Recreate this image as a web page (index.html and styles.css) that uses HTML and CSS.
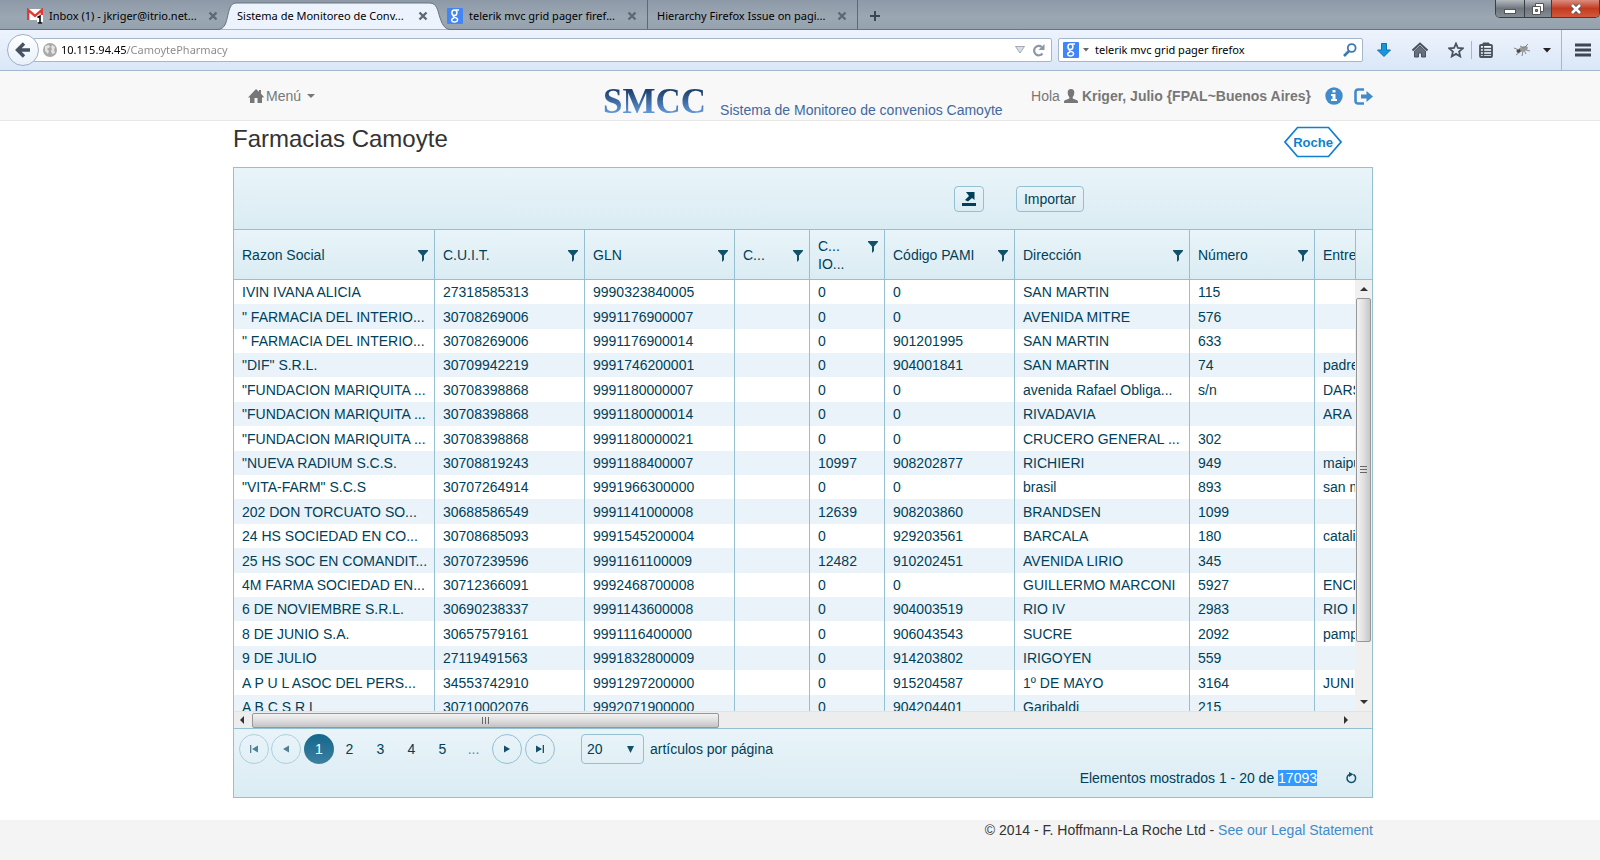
FILE: index.html
```html
<!DOCTYPE html>
<html lang="es">
<head>
    <meta charset="UTF-8">
    <title>Sistema de Monitoreo de Convenios Camoyte</title>
    <meta name="viewport" content="width=device-width, initial-scale=1.0">
    <link rel="stylesheet" href="styles.css">
</head>
<body>
    <svg class="defs" width="0" height="0">
        <symbol id="i-close" viewBox="0 0 10 10"><path d="M1.5 1.5 8.5 8.5M8.5 1.5 1.5 8.5" stroke="currentColor" stroke-width="2.4"/></symbol>
        <symbol id="i-google" viewBox="0 0 16 16"><rect width="16" height="16" rx="1" fill="#4285f4"/><g fill="none" stroke="#fff"><ellipse cx="7.4" cy="4.8" rx="2.5" ry="2.8" stroke-width="1.5"/><path d="M8.5 2H12M7 7.6C5.6 8.6 6.6 9.2 8.4 9.6c3.4.8 2.6 4.4-.9 4.4-3.6 0-3.8-3.4-.2-4" stroke-width="1.4"/></g></symbol>
        <symbol id="i-filter" viewBox="0 0 10 12"><path d="M0 0h10v1L6 5.500V10l-2 2V5.500L0 1z" fill="currentColor"/></symbol>
        <symbol id="i-first" viewBox="0 0 8 8"><path d="M0 0h1.300v8H0zM8 .500v7L2 4z" fill="currentColor"/></symbol>
        <symbol id="i-prev" viewBox="0 0 8 8"><path d="M7 .5v7L1 4z" fill="currentColor"/></symbol>
    </svg>

    <div class="browser">
        <div class="tabs">
            <div class="tab">
                <svg width="16" height="16" viewBox="0 0 16 16"><path d="M0 1h16v11H0z" fill="#fff"/><path d="M1.200 12V2L8 8l6.800-6v10" fill="none" stroke="#dd3b35" stroke-width="2.400"/><path d="M10 7h6v9h-6z" fill="#fff"/><path d="M10.500 9.500 13 8v7M10.500 15h5" fill="none" stroke="#000" stroke-width="1.500"/></svg>
                <span class="tab-title">Inbox (1) - jkriger@itrio.net...</span>
                <svg class="tab-close" width="10" height="10"><use href="#i-close"/></svg>
            </div>
            <div class="tab tab-active">
                <svg class="tab-shape" width="232" height="29" viewBox="0 0 232 29"><path d="M0 29C7 28 8 23 10 14 12 5 14 2.500 19 2.500H211C217 2.500 219 6 221 14 224 24 226 28 232 29" fill="#edf3fc" stroke="#66737f"/></svg>
                <span class="tab-title">Sistema de Monitoreo de Conv...</span>
                <svg class="tab-close" width="10" height="10"><use href="#i-close"/></svg>
            </div>
            <div class="tab tab-line">
                <svg width="16" height="16"><use href="#i-google"/></svg>
                <span class="tab-title">telerik mvc grid pager firef...</span>
                <svg class="tab-close" width="10" height="10"><use href="#i-close"/></svg>
            </div>
            <div class="tab tab-line">
                <span class="tab-title">Hierarchy Firefox Issue on pagi...</span>
                <svg class="tab-close" width="10" height="10"><use href="#i-close"/></svg>
            </div>
            <button class="new-tab" aria-label="Nueva pestaña"><svg width="12" height="12" viewBox="0 0 12 12"><path d="M6 1v10M1 6h10" stroke="#3d4752" stroke-width="2"/></svg></button>
            <div class="win-buttons">
                <button class="win-min" aria-label="Minimizar"><svg width="14" height="14" viewBox="0 0 14 14"><rect x="1.500" y="7.500" width="11" height="4" fill="#fff" stroke="#555"/></svg></button>
                <button class="win-max" aria-label="Restaurar"><svg width="14" height="14" viewBox="0 0 14 14"><path d="M4.500 1.500h8v8h-8z" fill="#fff" stroke="#555"/><path d="M1.500 4.500h8v8h-8z" fill="#fff" stroke="#555"/><path d="M4.500 7.500h2v2h-2z" fill="#888" stroke="#555"/></svg></button>
                <button class="win-close" aria-label="Cerrar"><svg width="14" height="14" viewBox="0 0 14 14"><path d="M3 3l8 8M11 3l-8 8" stroke="#555" stroke-width="4.500"/><path d="M3 3l8 8M11 3l-8 8" stroke="#fff" stroke-width="2.600"/></svg></button>
            </div>
        </div>
        <div class="toolbar">
            <button class="back" aria-label="Atrás"><svg width="16" height="16" viewBox="0 0 16 16"><path d="M9 1.500 2.500 8 9 14.500M3 8h12" fill="none" stroke="#46525f" stroke-width="3.400"/></svg></button>
            <div class="url-box">
                <svg width="14" height="14" viewBox="0 0 14 14"><circle cx="7" cy="7" r="7" fill="#a9a9a9"/><path d="M2 3l4-1 1 2-3 2 2 2-1 3-3-3zM9 2l3 2-1 3 1 3-3 1-1-3 1-2-1-2z" fill="#e4e4e4"/></svg>
                <input class="url" type="text" aria-label="Dirección" value="10.115.94.45/CamoytePharmacy">
                <svg width="10" height="8" viewBox="0 0 10 8"><path d="M.5.5h9L5 7z" fill="#d9dee6" stroke="#a3aab5"/></svg>
                <svg class="reload" width="13" height="13" viewBox="0 0 13 13"><path d="M10.500 9.500A4.700 4.700 0 1 1 9.800 3" fill="none" stroke="#8c98a6" stroke-width="2.200"/><path d="M12.500 0v6h-6z" fill="#8c98a6"/></svg>
            </div>
            <div class="search-box">
                <svg width="16" height="16"><use href="#i-google"/></svg>
                <svg class="engine" width="6" height="4" viewBox="0 0 6 4"><path d="M0 0h6L3 3.500z" fill="#666"/></svg>
                <input class="search" type="text" aria-label="Buscar" value="telerik mvc grid pager firefox">
                <svg width="14" height="14" viewBox="0 0 14 14"><circle cx="8.700" cy="5" r="3.900" fill="none" stroke="#3c78b4" stroke-width="1.800"/><path d="M6 8 1 13" stroke="#3c78b4" stroke-width="2.600"/></svg>
            </div>
            <div class="tools">
                <button aria-label="Descargas"><svg width="14" height="14" viewBox="0 0 14 14"><path d="M4.500.5h5V7h4L7 13.500.5 7h4z" fill="#1a94dc" stroke="#0f72b0"/></svg></button>
                <button aria-label="Inicio"><svg width="16" height="16" viewBox="0 0 16 16"><path d="M.500 8.500 8 1.500l7.500 7" fill="none" stroke="#46525f" stroke-width="2"/><path d="M2.500 9 8 4l5.500 5v6H9.500v-4h-3v4h-4z" fill="#66717c" stroke="#46525f"/></svg></button>
                <button aria-label="Marcador"><svg width="16" height="16" viewBox="0 0 16 16"><path d="M8 1.500 9.900 6l4.900.4-3.700 3.200 1.100 4.800L8 11.900l-4.200 2.500 1.100-4.800L1.200 6.400 6.100 6z" fill="none" stroke="#46525f" stroke-width="1.800"/></svg></button>
                <button class="clip" aria-label="Lista"><svg width="14" height="16" viewBox="0 0 14 16"><rect x="1" y="3" width="12" height="12" rx="1" fill="#fff" stroke="#46525f" stroke-width="1.800"/><path d="M4 3V1h6v2z" fill="#46525f" stroke="#46525f"/><path d="M1 6.500h12M1 9.500h12M1 12.500h12M4.500 4v11" stroke="#46525f" stroke-width="1.300"/></svg></button>
                <button class="bug" aria-label="Firebug"><svg width="16" height="14" viewBox="0 0 16 14"><ellipse cx="9" cy="6" rx="5" ry="2.500" transform="rotate(-20 9 6)" fill="#999"/><circle cx="4.500" cy="8" r="2" fill="#444"/><path d="M0 5l5 2M2 12l4-3M8 13l1-5M12 11 10 7M16 8l-4-1M6 3l4 2 4-4" stroke="#888" fill="none"/></svg></button>
                <button class="drop" aria-label="Más"><svg width="8" height="5" viewBox="0 0 8 5"><path d="M0 0h8L4 4.500z" fill="#222"/></svg></button>
                <button class="burger" aria-label="Menú"><svg width="16" height="14" viewBox="0 0 16 14"><path d="M0 2h16M0 7h16M0 12h16" stroke="#3d4752" stroke-width="2.800"/></svg></button>
            </div>
        </div>
    </div>

    <header class="navbar">
        <div class="container nav-inner">
            <a class="menu" href="#"><svg width="16" height="14" viewBox="0 0 16 14"><path d="M8 0l3 2.800V1h2v3.800L16 8l-1 .5h-1V14H9.500V9h-3v5H2V8.500H0z" fill="currentColor"/></svg><span>Menú</span><i class="caret"></i></a>
            <div class="brand">
                <span class="brand-logo">SMCC</span>
                <span class="brand-text">Sistema de Monitoreo de convenios Camoyte</span>
            </div>
            <div class="user">
                <span>Hola</span>
                <svg width="14" height="14" viewBox="0 0 14 14"><path d="M7 0c2.300 0 3.500 1.600 3.300 4C10.100 6 9.500 7 8.700 8v1.500L13 11.300c.8.400 1 1 1 2.700H0c0-1.700.2-2.300 1-2.700l4.300-1.800V8C4.500 7 3.900 6 3.700 4 3.500 1.600 4.700 0 7 0z" fill="currentColor"/></svg>
                <b>Kriger, Julio {FPAL~Buenos Aires}</b>
                <a href="#" class="info" aria-label="Información"><svg width="18" height="18" viewBox="0 0 18 18"><circle cx="9" cy="9" r="8.700" fill="#428bca"/><path d="M7.500 3h3v2.500h-3zM6 7h4.500v5H12v2H6v-2h1.500V9H6z" fill="#fff"/></svg></a>
                <a href="#" aria-label="Salir"><svg width="19" height="17" viewBox="0 0 19 17"><path d="M10 1.500H4A2.500 2.500 0 0 0 1.500 4v9A2.500 2.500 0 0 0 4 15.500h6" fill="none" stroke="#428bca" stroke-width="2.600"/><path d="M12.500 3 19 8.500 12.500 14v-3.500H7v-4h5.500z" fill="#428bca"/></svg></a>
            </div>
        </div>
    </header>

    <main class="container">
        <div class="page-head">
            <h1>Farmacias Camoyte</h1>
            <svg class="roche" width="58" height="32" viewBox="0 0 58 32"><path d="M13.500 1.500h31L57 16 44.500 30.500h-31L1 16z" fill="#fff" stroke="#0f7fd0" stroke-width="1.700"/><text x="29" y="21" text-anchor="middle">Roche</text></svg>
        </div>

        <div class="grid">
            <div class="grid-toolbar">
                <button class="btn btn-icon" aria-label="Exportar"><svg width="14" height="14" viewBox="0 0 14 14"><path d="M0 11h14v3H0z" fill="currentColor"/><path d="M4 0h8.500v8L10 6 6 9.500 3 8l4-4z" fill="currentColor"/></svg></button>
                <button class="btn">Importar</button>
            </div>
            <div class="grid-view">
                <div class="grid-scroll">
                    <table>
                        <colgroup><col class="w200"><col class="w150"><col class="w150"><col class="w75"><col class="w75"><col class="w130"><col class="w175"><col class="w125"><col class="w150"></colgroup>
                        <thead>
                            <tr>
                                <th><div><span>Razon Social</span><svg class="filter"><use href="#i-filter"/></svg></div></th>
                                <th><div><span>C.U.I.T.</span><svg class="filter"><use href="#i-filter"/></svg></div></th>
                                <th><div><span>GLN</span><svg class="filter"><use href="#i-filter"/></svg></div></th>
                                <th><div><span>C...</span><svg class="filter"><use href="#i-filter"/></svg></div></th>
                                <th><div class="two-lines"><span>C...<br>IO...</span><svg class="filter"><use href="#i-filter"/></svg></div></th>
                                <th><div><span>Código PAMI</span><svg class="filter"><use href="#i-filter"/></svg></div></th>
                                <th><div><span>Dirección</span><svg class="filter"><use href="#i-filter"/></svg></div></th>
                                <th><div><span>Número</span><svg class="filter"><use href="#i-filter"/></svg></div></th>
                                <th><div><span>Entre</span></div></th>
                            </tr>
                        </thead>
                        <tbody>
                            <tr><td>IVIN IVANA ALICIA</td><td>27318585313</td><td>9990323840005</td><td></td><td>0</td><td>0</td><td>SAN MARTIN</td><td>115</td><td></td></tr>
                            <tr><td>" FARMACIA DEL INTERIO...</td><td>30708269006</td><td>9991176900007</td><td></td><td>0</td><td>0</td><td>AVENIDA MITRE</td><td>576</td><td></td></tr>
                            <tr><td>" FARMACIA DEL INTERIO...</td><td>30708269006</td><td>9991176900014</td><td></td><td>0</td><td>901201995</td><td>SAN MARTIN</td><td>633</td><td></td></tr>
                            <tr><td>"DIF" S.R.L.</td><td>30709942219</td><td>9991746200001</td><td></td><td>0</td><td>904001841</td><td>SAN MARTIN</td><td>74</td><td>padre</td></tr>
                            <tr><td>"FUNDACION MARIQUITA ...</td><td>30708398868</td><td>9991180000007</td><td></td><td>0</td><td>0</td><td>avenida Rafael Obliga...</td><td>s/n</td><td>DARS</td></tr>
                            <tr><td>"FUNDACION MARIQUITA ...</td><td>30708398868</td><td>9991180000014</td><td></td><td>0</td><td>0</td><td>RIVADAVIA</td><td></td><td>ARA</td></tr>
                            <tr><td>"FUNDACION MARIQUITA ...</td><td>30708398868</td><td>9991180000021</td><td></td><td>0</td><td>0</td><td>CRUCERO GENERAL ...</td><td>302</td><td></td></tr>
                            <tr><td>"NUEVA RADIUM S.C.S.</td><td>30708819243</td><td>9991188400007</td><td></td><td>10997</td><td>908202877</td><td>RICHIERI</td><td>949</td><td>maipu</td></tr>
                            <tr><td>"VITA-FARM" S.C.S</td><td>30707264914</td><td>9991966300000</td><td></td><td>0</td><td>0</td><td>brasil</td><td>893</td><td>san m</td></tr>
                            <tr><td>202 DON TORCUATO SO...</td><td>30688586549</td><td>9991141000008</td><td></td><td>12639</td><td>908203860</td><td>BRANDSEN</td><td>1099</td><td></td></tr>
                            <tr><td>24 HS SOCIEDAD EN CO...</td><td>30708685093</td><td>9991545200004</td><td></td><td>0</td><td>929203561</td><td>BARCALA</td><td>180</td><td>catali</td></tr>
                            <tr><td>25 HS SOC EN COMANDIT...</td><td>30707239596</td><td>9991161100009</td><td></td><td>12482</td><td>910202451</td><td>AVENIDA LIRIO</td><td>345</td><td></td></tr>
                            <tr><td>4M FARMA SOCIEDAD EN...</td><td>30712366091</td><td>9992468700008</td><td></td><td>0</td><td>0</td><td>GUILLERMO MARCONI</td><td>5927</td><td>ENCI</td></tr>
                            <tr><td>6 DE NOVIEMBRE S.R.L.</td><td>30690238337</td><td>9991143600008</td><td></td><td>0</td><td>904003519</td><td>RIO IV</td><td>2983</td><td>RIO IV</td></tr>
                            <tr><td>8 DE JUNIO S.A.</td><td>30657579161</td><td>9991116400000</td><td></td><td>0</td><td>906043543</td><td>SUCRE</td><td>2092</td><td>pamp</td></tr>
                            <tr><td>9 DE JULIO</td><td>27119491563</td><td>9991832800009</td><td></td><td>0</td><td>914203802</td><td>IRIGOYEN</td><td>559</td><td></td></tr>
                            <tr><td>A P U L ASOC DEL PERS...</td><td>34553742910</td><td>9991297200000</td><td></td><td>0</td><td>915204587</td><td>1º DE MAYO</td><td>3164</td><td>JUNIN</td></tr>
                            <tr><td>A B C S R L</td><td>30710002076</td><td>9992071900000</td><td></td><td>0</td><td>904204401</td><td>Garibaldi</td><td>215</td><td></td></tr>
                        </tbody>
                    </table>
                </div>
                <div class="v-side">
                    <div class="v-head"></div>
                    <div class="v-bar">
                        <svg class="arrow" width="8" height="4" viewBox="0 0 8 4"><path d="M0 4h8L4 0z" fill="#333"/></svg>
                        <div class="v-thumb"><i></i></div>
                        <div class="v-track"></div>
                        <svg class="arrow" width="8" height="4" viewBox="0 0 8 4"><path d="M0 0h8L4 4z" fill="#333"/></svg>
                    </div>
                </div>
            </div>
            <div class="h-bar">
                <svg class="arrow" width="4" height="8" viewBox="0 0 4 8"><path d="M4 0v8L0 4z" fill="#333"/></svg>
                <div class="h-thumb"><i></i></div>
                <svg class="arrow h-right" width="4" height="8" viewBox="0 0 4 8"><path d="M0 0v8l4-4z" fill="#333"/></svg>
            </div>
            <div class="pager">
                <div class="pager-nav">
                    <button class="round off" aria-label="Primera"><svg width="8" height="8"><use href="#i-first"/></svg></button>
                    <button class="round off" aria-label="Anterior"><svg width="8" height="8"><use href="#i-prev"/></svg></button>
                    <ul>
                        <li class="current">1</li>
                        <li><a href="#">2</a></li>
                        <li><a href="#">3</a></li>
                        <li><a href="#">4</a></li>
                        <li><a href="#">5</a></li>
                        <li class="more"><a href="#">...</a></li>
                    </ul>
                    <button class="round" aria-label="Siguiente"><svg class="flip" width="8" height="8"><use href="#i-prev"/></svg></button>
                    <button class="round" aria-label="Última"><svg class="flip" width="8" height="8"><use href="#i-first"/></svg></button>
                    <span class="size-wrap">
                        <select id="pageSize"><option>20</option><option>50</option><option>100</option></select>
                        <svg width="8" height="7" viewBox="0 0 8 7"><path d="M1 0h7L4.500 7z" fill="#13506a"/></svg>
                    </span>
                    <label for="pageSize">artículos por página</label>
                </div>
                <div class="pager-info">
                    <span>Elementos mostrados 1 - 20 de <mark>17093</mark></span>
                    <button class="refresh" aria-label="Actualizar"><svg width="12" height="12" viewBox="0 0 12 12"><path d="M8.500 2.500A4.300 4.300 0 1 1 4 2.600" fill="none" stroke="currentColor" stroke-width="1.500"/><path d="M4 0l4.500 2.200L4 5z" fill="currentColor"/></svg></button>
                </div>
            </div>
        </div>
    </main>

    <footer>
        <div class="container">&copy; 2014 - F. Hoffmann-La Roche Ltd - <a href="#">See our Legal Statement</a></div>
    </footer>
</body>
</html>
```
FILE: styles.css
```css
* { box-sizing: border-box; }
html { height: 100%; }
body {
    margin: 0;
    min-height: 100%;
    display: flex;
    flex-direction: column;
    background: #fff;
    color: #333;
    font: 14px/20px "Liberation Sans", Arial, sans-serif;
}
button, input, select { font: inherit; color: inherit; margin: 0; padding: 0; border: 0; background: none; outline: 0; }
button { display: flex; align-items: center; justify-content: center; }
svg { display: block; flex: none; }
a { color: #428bca; text-decoration: none; }
.defs { position: absolute; }

/* navegador */
.browser { font: 11px/16px "Noto Sans", "Open Sans", sans-serif; color: #000; }
.tabs {
    display: flex;
    height: 30px;
    padding-left: 18px;
    border-bottom: 1px solid #66737f;
    background: linear-gradient(#8d99a6, #9ba7b3 60%, #95a1ad);
}
.tab { position: relative; display: flex; align-items: center; width: 210px; padding: 3px 10px 0 9px; gap: 6px; }
.tab > svg, .tab-title { position: relative; }
.tab-title { flex: 1; white-space: nowrap; }
.tab-close { color: #5d6974; }
.tab-line { border-right: 1px solid #5d6974; }
.tab-active { z-index: 1; }
.tab > .tab-shape { position: absolute; left: -10px; top: 0; height: 30px; }
.new-tab { width: 34px; padding-top: 3px; }
.win-buttons { display: flex; margin-left: auto; height: 18px; border: 1px solid #3b3f45; border-top: 0; border-radius: 0 0 5px 5px; overflow: hidden; }
.win-buttons button { width: 28px; background: linear-gradient(#b5b9be, #6f767e 50%, #858c94); }
.win-buttons .win-max { border-left: 1px solid #3b3f45; border-right: 1px solid #3b3f45; }
.win-buttons .win-close { width: 47px; background: linear-gradient(#dc8d7f, #c23a20 50%, #d4593c); }

.toolbar {
    display: flex;
    align-items: center;
    height: 41px;
    padding: 0 10px 0 7px;
    border-bottom: 1px solid #a3b8d2;
    background: linear-gradient(#edf3fc, #dae7f7);
}
.back { z-index: 1; width: 32px; height: 32px; border: 1px solid #9fb0c4; border-radius: 50%; background: linear-gradient(#fff, #e8f0fa); }
.url-box, .search-box { display: flex; align-items: center; height: 24px; border: 1px solid #a6b6ca; border-radius: 2px; background: #fff; }
.url-box { flex: 1; margin-left: -6px; padding: 0 6px 0 9px; }
/* el host va en negro y la ruta en gris */
.url {
    flex: 1;
    margin-left: 4px;
    background: linear-gradient(90deg, #000 66px, #888 66px);
    -webkit-background-clip: text;
    background-clip: text;
    color: transparent;
}
.reload { margin-left: 7px; }
.search-box { width: 305px; margin-left: 6px; padding: 0 5px 0 4px; }
.engine { margin: 0 6px 0 4px; }
.search { flex: 1; }
.tools { display: flex; align-items: center; margin-left: 14px; }
.tools button { width: 14px; height: 40px; margin-right: 21px; }
.tools button + button { width: 16px; margin-right: 20px; }
.tools .clip { position: relative; margin-left: -6px; }
.tools .clip::before { content: ""; position: absolute; left: -7px; top: 11px; height: 18px; border-left: 1px solid #a9b6c6; }
.tools button.bug { margin-right: 13px; }
.tools button.drop { width: 8px; margin-right: 10px; }
.tools button.burger { width: 29px; margin: 0; padding-left: 13px; border-left: 1px solid #a9b6c6; }

/* cabecera */
.container { width: 100%; max-width: 1146px; margin: 0 auto; padding-left: 6px; }
.navbar { background: #f8f8f8; border-bottom: 1px solid #e7e7e7; color: #777; }
.nav-inner { display: flex; height: 49px; }
.menu { display: flex; align-items: center; gap: 2px; padding-left: 15px; height: 50px; color: #777; }
.caret { margin-left: 4px; border: 4px solid transparent; border-top-color: #777; border-bottom: 0; }
.brand { display: flex; align-items: flex-end; gap: 14px; height: 49px; margin-left: 288px; }
.brand-logo {
    font: bold 35px/36px "Liberation Serif", serif;
    background: linear-gradient(#1f4371 20%, #6aa5ea 90%);
    -webkit-background-clip: text;
    background-clip: text;
    color: transparent;
}
.brand-text { color: #40699f; line-height: 20px; white-space: nowrap; }
.user { display: flex; align-items: center; gap: 4px; height: 50px; margin-left: auto; white-space: nowrap; }
.user .info { margin: 0 7px 0 10px; }

.page-head { display: flex; justify-content: space-between; height: 46px; }
h1 { margin: 4px 0 0; font-size: 24px; line-height: 28px; font-weight: 400; color: #333; }
.roche { margin: 5px 31px 0 0; }
.roche text { font: bold 13px "Liberation Sans Narrow", "Liberation Sans", sans-serif; fill: #0f7fd0; }

/* grilla */
.grid { border: 1px solid #94c0d2; color: #003f59; }
.grid-toolbar { display: flex; justify-content: flex-end; gap: 32px; height: 62px; padding: 18px 288px 0 0; border-bottom: 1px solid #94c0d2; background: linear-gradient(#e9f4f9, #daecf3); }
.btn { height: 26px; padding: 0 7px; border: 1px solid #94c0d2; border-radius: 4px; background: linear-gradient(#eaf4f9, #daecf3); }
.grid-view { display: flex; height: 481px; }
.grid-scroll { flex: 1; min-width: 0; overflow: hidden; }
table { table-layout: fixed; width: 1230px; border-collapse: separate; border-spacing: 0; }
.w200 { width: 200px; }
.w175 { width: 175px; }
.w150 { width: 150px; }
.w130 { width: 130px; }
.w125 { width: 125px; }
.w75 { width: 75px; }
th { height: 50px; padding: 0 6px 0 8px; border-bottom: 1px solid #94c0d2; font-weight: 400; text-align: left; background: linear-gradient(#e9f4f9, #daecf3); }
th div { display: flex; align-items: center; justify-content: space-between; line-height: 18px; padding-top: 1px; }
th .two-lines { align-items: flex-start; }
.filter { width: 10px; height: 12px; margin-top: 2px; color: #13506a; }
.two-lines .filter { margin-top: 4px; }
td { height: 24px; padding: 0 0 0 8px; line-height: 24px; white-space: nowrap; }
th + th, td + td { border-left: 1px solid #94c0d2; }
tbody tr:nth-child(even) { background: #eaf3f9; }
tbody tr:nth-child(5n) td, tbody tr:nth-child(5n+2) td { height: 25px; }

.v-side { display: flex; flex-direction: column; width: 17px; }
.v-head { height: 50px; border-left: 1px solid #94c0d2; border-bottom: 1px solid #94c0d2; background: linear-gradient(#e9f4f9, #daecf3); }
.v-bar { flex: 1; display: flex; flex-direction: column; align-items: center; padding: 7px 0; background: #f0f0f0; }
.v-thumb { display: flex; align-items: center; justify-content: center; flex: 342; width: 15px; margin-top: 7px; border: 1px solid #979797; border-radius: 2px; background: linear-gradient(90deg, #f3f3f3, #e0e0e1 50%, #c6c6c9); }
.v-thumb i { width: 7px; height: 8px; background: repeating-linear-gradient(#666 0 1px, transparent 1px 3px); }
.v-track { flex: 58; }
.h-bar { display: flex; align-items: center; height: 17px; padding: 0 24px 0 6px; border-top: 1px solid #e3e3e3; background: #ededed; }
.h-thumb { display: flex; align-items: center; justify-content: center; width: 467px; height: 15px; margin-left: 8px; border: 1px solid #979797; border-radius: 2px; background: linear-gradient(#f3f3f3, #dedede 50%, #c3c3c6); }
.h-thumb i { width: 8px; height: 7px; background: repeating-linear-gradient(90deg, #666 0 1px, transparent 1px 3px); }
.h-right { margin-left: auto; }

/* paginador */
.pager { height: 69px; padding: 5px 15px 0 5px; border-top: 1px solid #94c0d2; background: linear-gradient(#e9f4f9, #daecf3); }
.pager-nav { display: flex; align-items: center; height: 30px; }
.round { width: 30px; height: 30px; margin-right: 3px; border: 1px solid #94c0d2; border-radius: 50%; color: #13506a; }
.round.off { margin-right: 2px; opacity: .7; }
.flip { transform: rotate(180deg); }
.pager ul { display: flex; margin: 0 3px 0 1px; padding: 0; list-style: none; line-height: 30px; text-align: center; }
.pager li { width: 31px; }
.pager li a { color: #003f59; }
.pager li.more a { color: #5f8ba0; }
.pager li.current { width: 30px; border-radius: 50%; color: #fff; background: linear-gradient(#14678c, #3c80a0); }
.size-wrap { position: relative; margin: 0 6px 0 23px; }
.size-wrap svg { position: absolute; right: 10px; top: 12px; pointer-events: none; }
select { display: block; width: 63px; height: 30px; padding-left: 5px; border: 1px solid #94c0d2; border-radius: 4px; appearance: none; }
.pager-info { display: flex; align-items: center; justify-content: flex-end; gap: 28px; height: 28px; }
mark { color: #fff; background: #3399ff; }
.refresh { color: #13506a; }

footer { flex: 1; margin-top: 22px; background: #f4f4f4; text-align: right; }
```
